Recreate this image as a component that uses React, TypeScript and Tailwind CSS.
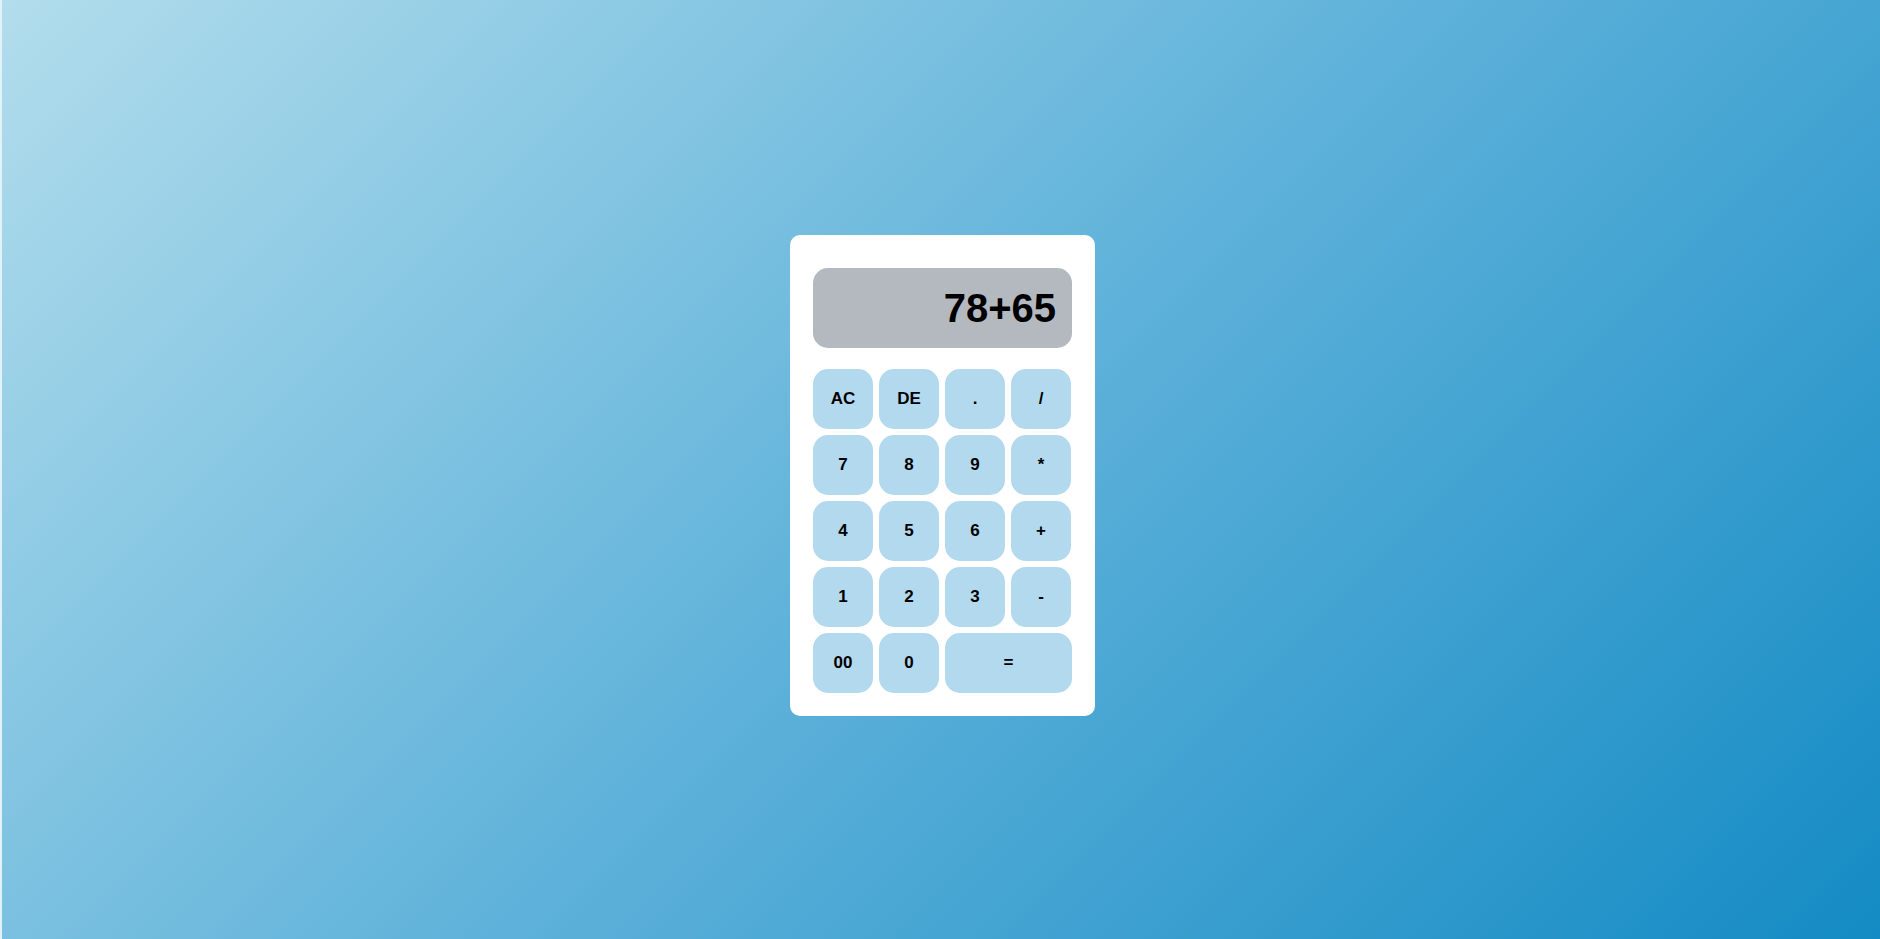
import React from "react";

const keys: { label: string; wide?: boolean }[] = [
  { label: "AC" }, { label: "DE" }, { label: "." }, { label: "/" },
  { label: "7" }, { label: "8" }, { label: "9" }, { label: "*" },
  { label: "4" }, { label: "5" }, { label: "6" }, { label: "+" },
  { label: "1" }, { label: "2" }, { label: "3" }, { label: "-" },
  { label: "00" }, { label: "0" }, { label: "=", wide: true },
];

export default function App() {
  return (
    <div
      className="w-full h-[939px] flex border-l-2 border-[#e3f2f8] bg-[linear-gradient(135deg,#b2ddec_0%,#5fb2da_50%,#148bc4_100%)]"
      style={{ fontFamily: '"Liberation Sans", Arial, sans-serif' }}
    >
      <div className="ml-[788px] mt-[235px] w-[305px] h-[481px] bg-white rounded-[10px] px-[23px] pt-[33px] pb-[23px] flex flex-col">
        <div className="w-[259px] h-[80px] bg-[#b3b9bf] rounded-[15px] flex items-center justify-end pr-[16px] text-[40px] font-bold text-black leading-none">
          78+65
        </div>
        <div className="mt-[21px] grid grid-cols-[60px_60px_60px_60px] gap-[6px] auto-rows-[60px]">
          {keys.map((k) => (
            <button
              key={k.label}
              className={`${k.wide ? "col-span-2 w-[127px]" : "w-[60px]"} h-[60px] bg-[#b3d9ef] rounded-[15px] flex items-center justify-center text-[17px] font-bold text-black`}
            >
              {k.label}
            </button>
          ))}
        </div>
      </div>
    </div>
  );
}
